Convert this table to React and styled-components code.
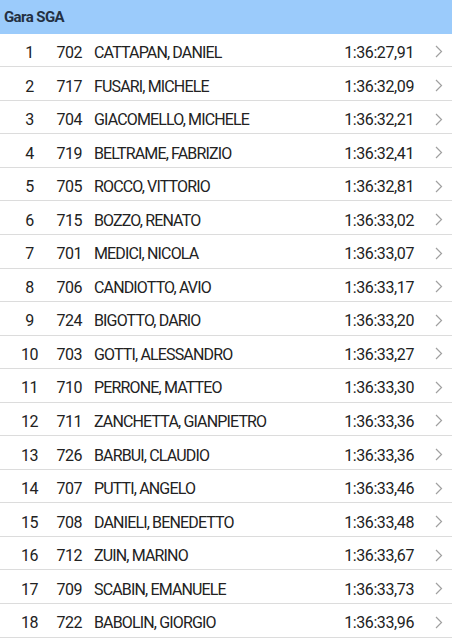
import React from "react";
import styled, { createGlobalStyle } from "styled-components";

const Global = createGlobalStyle`
  html, body { margin: 0; padding: 0; background: #fff; }
  body { font-family: Roboto, "Liberation Sans", sans-serif; }
`;

const data = [
  [1, 702, "CATTAPAN, DANIEL", "1:36:27,91"],
  [2, 717, "FUSARI, MICHELE", "1:36:32,09"],
  [3, 704, "GIACOMELLO, MICHELE", "1:36:32,21"],
  [4, 719, "BELTRAME, FABRIZIO", "1:36:32,41"],
  [5, 705, "ROCCO, VITTORIO", "1:36:32,81"],
  [6, 715, "BOZZO, RENATO", "1:36:33,02"],
  [7, 701, "MEDICI, NICOLA", "1:36:33,07"],
  [8, 706, "CANDIOTTO, AVIO", "1:36:33,17"],
  [9, 724, "BIGOTTO, DARIO", "1:36:33,20"],
  [10, 703, "GOTTI, ALESSANDRO", "1:36:33,27"],
  [11, 710, "PERRONE, MATTEO", "1:36:33,30"],
  [12, 711, "ZANCHETTA, GIANPIETRO", "1:36:33,36"],
  [13, 726, "BARBUI, CLAUDIO", "1:36:33,36"],
  [14, 707, "PUTTI, ANGELO", "1:36:33,46"],
  [15, 708, "DANIELI, BENEDETTO", "1:36:33,48"],
  [16, 712, "ZUIN, MARINO", "1:36:33,67"],
  [17, 709, "SCABIN, EMANUELE", "1:36:33,73"],
  [18, 722, "BABOLIN, GIORGIO", "1:36:33,96"],
];

const Page = styled.div`
  width: 452px;
  height: 640px;
  overflow: hidden;
  background: #fff;
`;

const Header = styled.div`
  height: 33.7px;
  background: #9bcbfb;
  display: flex;
  align-items: center;
  padding-left: 4px;
  font-family: Roboto, sans-serif;
  font-weight: 700;
  font-size: 15px;
  letter-spacing: -0.6px;
  color: #243042;
`;

const List = styled.div`
  display: flex;
  flex-direction: column;
`;

const Row = styled.div`
  height: 32.55px;
  box-sizing: content-box;
  border-bottom: 1px solid #dcdcdc;
  display: grid;
  grid-template-columns: 40px 42px 1fr auto 38px;
  align-items: center;
  font-family: Roboto, sans-serif;
  font-size: 16px;
  color: #222;
`;

const Cell = styled.span`
  padding-top: 5px;
  white-space: nowrap;
`;

const Rank = styled(Cell)`
  text-align: center;
  padding-left: 19px;
  letter-spacing: -0.5px;
`;

const Bib = styled(Cell)`
  text-align: right;
  letter-spacing: -0.5px;
`;

const Name = styled(Cell)`
  padding-left: 12px;
  letter-spacing: -0.85px;
`;

const Time = styled(Cell)`
  text-align: right;
  letter-spacing: -0.4px;
`;

const Chevron = styled.span`
  display: flex;
  justify-content: flex-end;
  padding-right: 9px;
  padding-top: 4px;
`;

export default function App() {
  return (
    <Page>
      <Global />
      <Header>Gara SGA</Header>
      <List>
        {data.map(([pos, bib, name, time]) => (
          <Row key={pos}>
            <Rank>{pos}</Rank>
            <Bib>{bib}</Bib>
            <Name>{name}</Name>
            <Time>{time}</Time>
            <Chevron>
              <svg width="8" height="13" viewBox="0 0 8 13">
                <path d="M1 1 L6.5 6.5 L1 12" fill="none" stroke="#a0a0a0" strokeWidth="1.2" />
              </svg>
            </Chevron>
          </Row>
        ))}
      </List>
    </Page>
  );
}
